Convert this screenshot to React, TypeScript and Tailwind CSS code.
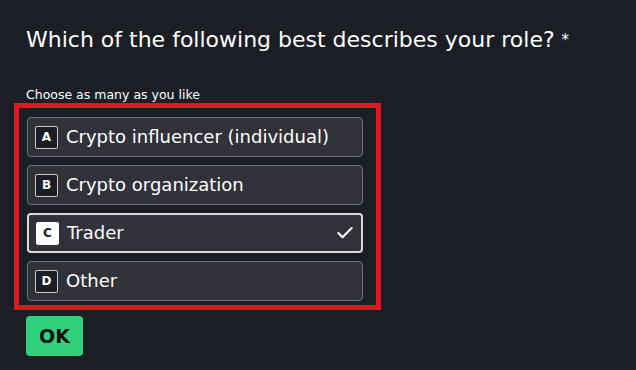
import { useState } from 'react';
import { Check } from 'lucide-react';

type Choice = {
  key: string;
  label: string;
};

const choices: Choice[] = [
  { key: 'A', label: 'Crypto influencer (individual)' },
  { key: 'B', label: 'Crypto organization' },
  { key: 'C', label: 'Trader' },
  { key: 'D', label: 'Other' },
];

export default function App() {
  const [selected, setSelected] = useState<string[]>(['C']);

  const toggle = (key: string) => {
    setSelected((prev) => (prev.includes(key) ? prev.filter((k) => k !== key) : [...prev, key]));
  };

  return (
    <div
      className="min-h-screen bg-[#1b1e24] pl-[26px] pt-[24px] text-white"
      style={{ fontFamily: '"DejaVu Sans", Verdana, sans-serif' }}
    >
      <h1 className="text-[22px] leading-[32px]">
        Which of the following best describes your role? <span className="align-top text-[15px]">*</span>
      </h1>

      <p className="mt-[31px] text-[12.5px] leading-[16px]">Choose as many as you like</p>

      <div className="-ml-[12px] w-[367px] border-[5px] border-[#e3161f] pb-[4px] pl-[8px] pr-[13px] pt-[9px]">
        <div className="flex flex-col gap-2">
          {choices.map((choice) => {
            const isOn = selected.includes(choice.key);
            return (
              <button
                key={choice.key}
                onClick={() => toggle(choice.key)}
                className={`flex h-[40px] w-full items-center rounded-[4px] bg-[#303139] pl-[7px] pr-[6px] text-left ${
                  isOn ? 'border-2 border-[#d9d9db] pl-[6px] pr-[5px]' : 'border border-[#6d7077]'
                }`}
              >
                <span
                  className={`flex h-[23px] w-[23px] items-center justify-center rounded-[2px] border text-[12px] font-bold ${
                    isOn ? 'border-white bg-white text-[#1b1e24]' : 'border-[#c9cacd] bg-[#1b1e24] text-white'
                  }`}
                >
                  {choice.key}
                </span>
                <span className="ml-[8px] flex-1 text-[18px] leading-[24px]">{choice.label}</span>
                {isOn && <Check className="h-[20px] w-[20px]" strokeWidth={2.5} />}
              </button>
            );
          })}
        </div>
      </div>

      <button className="mt-[6px] flex h-[40px] w-[57px] items-center justify-center rounded-[4px] bg-[#2fd17c] text-[19px] font-bold text-[#111]">
        OK
      </button>
    </div>
  );
}
